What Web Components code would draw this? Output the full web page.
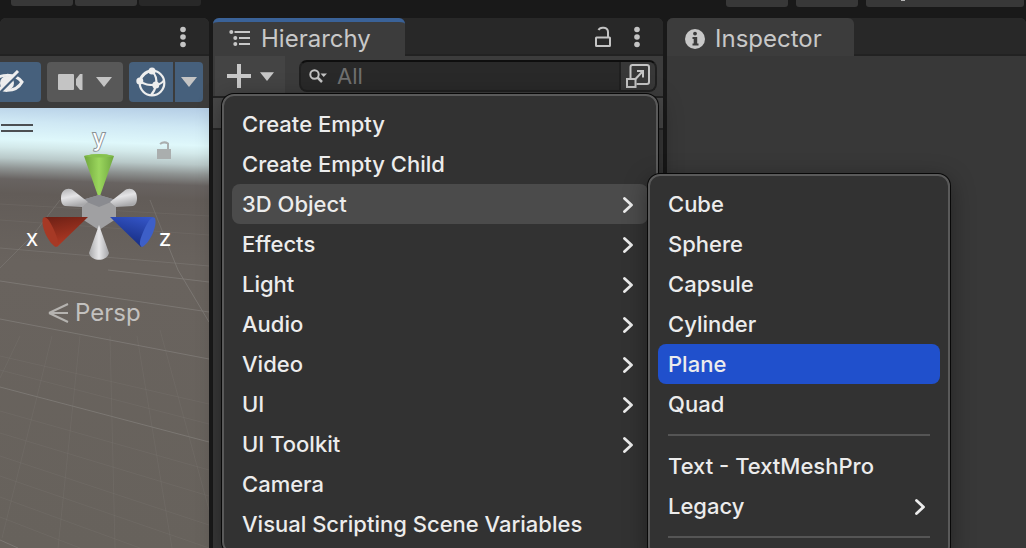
<!DOCTYPE html>
<html lang="en">
<head>
<meta charset="utf-8">
<meta name="viewport" content="width=device-width, initial-scale=1">
<title>Editor</title>
<style>
html,body{margin:0;height:100%;overflow:hidden;background:#191919;color:#c8c8c8;font-family:Inter,"Liberation Sans",sans-serif;font-size:24px}
</style>
</head>
<body>
<editor-app></editor-app>
<script>
const define = (name, html, setup) => customElements.define(name, class extends HTMLElement {
  constructor() {
    super();
    this.attachShadow({ mode: 'open' }).innerHTML = html;
  }
  connectedCallback() { if (setup) setup(this, this.shadowRoot); }
});

const icons = {
  kebab: [8, 22, '<g fill="currentColor"><circle cx="4" cy="3.5" r="2.8"/><circle cx="4" cy="11" r="2.8"/><circle cx="4" cy="18.5" r="2.8"/></g>'],
  lock: [16, 22, '<g fill="none" stroke="currentColor" stroke-width="2"><rect x="1" y="11.500" width="14" height="8.500" rx=".5"/><path d="M13 11V6C13 .8 5 .5 3.500 4"/></g>'],
  down: [16, 10, '<path d="M0 0H16L8 10Z" fill="currentColor"/>'],
  plus: [24, 24, '<path d="M12 0V24M0 12H24" stroke="currentColor" stroke-width="4"/>'],
  tree: [22, 18, '<g fill="currentColor"><circle cx="2.300" cy="2" r="2"/><circle cx="6.300" cy="8" r="2"/><circle cx="6.300" cy="14" r="2"/></g><path d="M5.500 2H21M10 8H21M10 14H21" stroke="currentColor" stroke-width="2"/>'],
  info: [20, 20, '<circle cx="10" cy="10" r="10" fill="currentColor"/><circle cx="10" cy="4.600" r="1.900" fill="#3c3c3c"/><path d="M7.500 8H12.200V14.500H13.500V16.500H7.500V14.500H8.700V10H7.500Z" fill="#3c3c3c"/>'],
  search: [18, 14, '<circle cx="5.500" cy="5.500" r="4.200" fill="none" stroke="currentColor" stroke-width="2"/><path d="M8.500 8.500L13 13" stroke="currentColor" stroke-width="2.500"/><path d="M11.500 4.500H18L14.700 8Z" fill="currentColor"/>'],
  expand: [24, 24, '<g fill="none" stroke="currentColor" stroke-width="2"><path d="M4.500 14V3Q4.500 1 6.500 1H21Q23 1 23 3V18Q23 20 21 20H10.500"/><path d="M9.500 15L17 7M11 7H17V13.500"/><rect x="1" y="15" width="8.500" height="8"/></g>'],
  chevron: [12, 18, '<path d="M2.500 3.500L9.500 10L2.500 16.500" fill="none" stroke="currentColor" stroke-width="2.800" stroke-linecap="round" stroke-linejoin="round"/>'],
  camera: [26, 18, '<rect y="1" width="16" height="16" rx="1" fill="currentColor"/><path d="M18 6L22 1H24.500V17H22L18 12Z" fill="currentColor"/>'],
  eye: [34, 24, '<path d="M2 13C8 3 25 3 32 12C26 23 9 23 2 13Z" fill="none" stroke="currentColor" stroke-width="3"/><circle cx="17" cy="13" r="7" fill="currentColor"/><path d="M9 23L28 4" stroke="#46607c" stroke-width="3"/><path d="M6 23L28 1" stroke="currentColor" stroke-width="3"/>'],
  globe: [30, 30, '<g fill="none" stroke="currentColor" stroke-width="2.200"><circle cx="16" cy="16" r="12.300"/><path d="M16 4C20 8 21 13 20 18C19 23 17 26 15 28M4 14C8 18 13 18 20 18C24 17 27 16 28 13M4 14C6 9 10 5 16 4"/></g><g fill="currentColor"><circle cx="16" cy="4" r="3.500"/><circle cx="3.800" cy="14" r="3.500"/><circle cx="19.800" cy="18" r="3.500"/></g>']
};

define('ui-icon', '', (el, root) => {
  const [w, h, art] = icons[el.getAttribute('name')];
  const s = Number(el.getAttribute('width')) || w;
  root.innerHTML = `<style>:host{display:inline-flex;flex:none}svg{display:block}</style>
    <svg width="${s}" height="${Math.round(h * s / w)}" viewBox="0 0 ${w} ${h}" aria-hidden="true">${art}</svg>`;
});

define('dock-tab', `<style>
  :host{display:flex}
  button{all:unset;box-sizing:border-box;display:flex;align-items:center;gap:10px;height:38px;padding:4px 32px 0 18px;background:#3c3c3c;color:#c8c8c8;border-radius:6px 6px 0 0;white-space:nowrap;line-height:34px}
  :host([active]) button{border-top:4px solid #3a6298;padding:0 34px 0 16px}
</style><button role="tab"><slot name="icon"></slot><slot></slot></button>`);

define('dock-panel', `<style>
  :host{display:flex;flex-direction:column;min-width:0;background:#383838;border-radius:6px 6px 0 0}
  header{display:flex;height:38px;flex:none;background:#282828;border-radius:6px 6px 0 0;box-shadow:inset 0 -2px #222}
  .tools{margin-left:auto;display:flex;align-items:center;gap:22px;padding-right:22px;color:#c4c4c4}
</style><header><slot name="tab"></slot><div class="tools"><slot name="tools"></slot></div></header><slot></slot>`);

define('icon-button', `<style>
  :host{display:inline-flex}
  button{all:unset;display:flex;align-items:center;justify-content:center}
</style><button><slot></slot></button>`, (el, root) => {
  root.querySelector('button').setAttribute('aria-label', el.getAttribute('label'));
});

define('top-bar', `<style>
  :host{display:flex;height:18px;align-items:flex-start;padding:0 2px 0 11px;overflow:hidden}
  span{display:block;width:62px;height:6px;background:#383838;border-radius:0 0 3px 3px;margin-right:2px}
  span.off{background:#282828}
  .right{display:flex;gap:8px;margin-left:auto}
  .right span{margin:0;height:7px}
  .right .wide{width:158px;background:linear-gradient(#b4b4b4,#b4b4b4) 35px 0/4px 1px no-repeat #383838}
</style><span></span><span></span><span class="off"></span><div class="right"><span></span><span></span><span class="wide"></span></div>`);

define('scene-toolbar', `<style>
  :host{display:flex;justify-content:flex-end;gap:6px;height:40px;padding:6px;background:#3c3c3c;flex:none;overflow:hidden}
  icon-button{height:40px;align-items:center;justify-content:center;background:#585858;border-radius:4px;flex:none;color:#c4c4c4}
  .on{background:#46607c;color:#eee}
  .eye{width:60px;justify-content:flex-end;box-sizing:border-box;padding-right:17px}
  .cam{width:76px}
  .pair{display:flex;gap:2px}
  .globe{width:44px;border-radius:4px 0 0 4px}
  .more{width:28px;border-radius:0 4px 4px 0;color:#c4c4c4}
  .cam ui-icon + ui-icon{margin-left:12px}
</style>
<icon-button class="on eye" label="Scene visibility"><ui-icon name="eye"></ui-icon></icon-button>
<icon-button class="cam" label="Camera settings"><ui-icon name="camera"></ui-icon><ui-icon name="down"></ui-icon></icon-button>
<div class="pair"><icon-button class="on globe" label="Gizmos"><ui-icon name="globe"></ui-icon></icon-button><icon-button class="on more" label="Gizmo options"><ui-icon name="down"></ui-icon></icon-button></div>`);

define('scene-view', `<style>
  :host{display:block;position:relative;flex:1;min-height:0;overflow:hidden;
    background:linear-gradient(182deg,#b4cde5 0,#cfe8f4 20px,#dff8fb 38px,#d3e9ea 46px,#b9c9c9 57px,#8f9493 67px,#686361 78px,#625c58 92px,#69635e 160px,#67625c 100%)}
  svg{display:block;position:absolute;left:0;top:0}
  text{font-size:23px;font-family:Inter,sans-serif;fill:#fff;text-anchor:middle}
  button{all:unset;position:absolute;left:48px;top:190px;display:flex;align-items:center;gap:6px;line-height:30px;color:#c3c1bf}
  button svg{position:static}
</style>
<svg width="100%" height="440" viewBox="0 0 209 440" preserveAspectRatio="xMinYMin slice" aria-label="Scene">
  <defs>
    <linearGradient id="g"><stop stop-color="#6fa53c"/><stop offset=".5" stop-color="#9bd65d"/><stop offset="1" stop-color="#6fa740"/></linearGradient>
    <linearGradient id="w"><stop stop-color="#a9a9ab"/><stop offset=".5" stop-color="#e6e6e8"/><stop offset="1" stop-color="#a5a5a8"/></linearGradient>
    <linearGradient id="wl" x1="0" y1="0" x2=".3" y2="1"><stop stop-color="#b0b0b2"/><stop offset=".5" stop-color="#e4e4e6"/><stop offset="1" stop-color="#a9a9ab"/></linearGradient>
    <linearGradient id="r" x1="0" y1="0" x2=".3" y2="1"><stop stop-color="#6c2015"/><stop offset="1" stop-color="#b23a24"/></linearGradient>
    <linearGradient id="b" x1="1" y1="0" x2=".6" y2="1"><stop stop-color="#3658cc"/><stop offset="1" stop-color="#162c80"/></linearGradient>
  </defs>
  <g fill="none" stroke="#827e79">
    <path d="M0 173L209 204M108 162L209 174M0 211L209 251M0 279L209 334M0 432L18 440M165 130L178 162L209 214" opacity=".75"/>
    <path d="M0 160L33 127L60 92M150 92L165 130M0 140L209 158" opacity=".5"/>
    <path d="M0 96L209 108M0 112L209 127M52 228L2 430M80 228L58 440M110 228L115 440M137 228L172 440M160 222L209 402M0 303L209 362M0 325L209 388M0 348L209 417M0 368L209 440M0 389L140 440M0 409L80 440M20 228L0 270M0 248L209 296M0 262L209 316" opacity=".22"/>
  </g>
  <path d="M1 17H33M1 23H33" stroke="#4c4f52" stroke-width="2"/>
  <text x="99" y="38" stroke="#8a9296" stroke-width="2" paint-order="stroke">y</text>
  <text x="32" y="138">x</text><text x="165" y="138">z</text>
  <g fill="#aaaeae"><rect x="157" y="41" width="14" height="10"/><path d="M168 41V35.500Q164 33 160 36" fill="none" stroke="#aaaeae" stroke-width="2"/></g>
  <path d="M84 48Q99 44 114 48L100 88H98Z" fill="url(#g)"/>
  <path d="M84 48Q99 44 114 48Q99 51 84 48Z" fill="#87c24e"/>
  <path d="M82 92L99 87L116 92V111L99 122L82 111Z" fill="#a0a0a2"/>
  <path d="M82 92L99 87L116 92L99 99Z" fill="#8a8b90"/>
  <path d="M61 90C61 80 70 79 74 83L88 94L82 99L65 98C62 97 61 94 61 90Z" fill="url(#wl)"/>
  <path d="M137 90C137 80 128 79 124 83L110 94L116 99L133 98C136 97 137 94 137 90Z" fill="url(#wl)"/>
  <path d="M99 117L109 145C107 154 91 154 89 145Z" fill="url(#w)"/>
  <path d="M45 109L88 109L57 139Z" fill="url(#r)"/>
  <path d="M43 110C46 107 50 113 54 122C58 131 60 137 56 139C50 137 40 119 43 110Z" fill="#a63925"/>
  <path d="M153 109L110 109L141 139Z" fill="url(#b)"/>
  <path d="M155 110C152 107 148 113 144 122C140 131 138 137 142 139C148 137 158 119 155 110Z" fill="#3d5fc8"/>
</svg>
<button><svg width="21" height="22" viewBox="0 0 21 22" aria-hidden="true"><path d="M1 11L20 2M1 11H20M1 11L20 20" fill="none" stroke="#b5b3b0" stroke-width="2"/></svg>Persp</button>`);

define('search-field', `<style>
  :host{display:flex;flex:1;min-width:0;height:32px;box-sizing:border-box;background:#292929;border:2px solid #202020;border-top-color:#0e0e0e;border-radius:8px;overflow:hidden}
  label{display:flex;align-items:center;gap:10px;flex:1;min-width:0;padding-left:8px;color:#c4c4c4}
  input{all:unset;flex:1;min-width:0;font:22px/28px Inter,sans-serif;color:#ddd}
  input::placeholder{color:#707070;opacity:1}
  icon-button{width:36px;border-left:2px solid #202020;background:#383838;color:#c4c4c4;justify-content:center;align-items:center;box-sizing:border-box}
</style>
<label><ui-icon name="search"></ui-icon><input placeholder="All" aria-label="Search hierarchy"></label>
<icon-button label="Open search window"><ui-icon name="expand"></ui-icon></icon-button>`);

define('hierarchy-toolbar', `<style>
  :host{display:flex;align-items:center;height:40px;flex:none;padding:0 6px 0 2px;gap:14px;background:#3c3c3c;border-bottom:2px solid #232323}
  icon-button{width:70px;height:40px;background:#444;color:#c8c8c8;align-items:center;justify-content:center}
  icon-button ui-icon + ui-icon{margin-left:9px}
</style>
<icon-button label="Create"><ui-icon name="plus"></ui-icon><ui-icon name="down" width="14"></ui-icon></icon-button><search-field></search-field>`);

define('context-menu', `<style>
  :host{display:block;box-sizing:border-box;position:absolute;z-index:2;padding:8px;background:#323232;border:2px solid #5a5a5a;border-radius:12px;box-shadow:0 0 0 1px #080808,0 6px 24px rgba(0,0,0,.4)}
</style><div role="menu"><slot></slot></div>`);

define('menu-item', `<style>
  :host{display:block;position:relative}
  button{all:unset;box-sizing:border-box;display:flex;align-items:center;justify-content:space-between;width:100%;height:40px;padding:0 14px 0 10px;border-radius:8px;color:#ececec;font-size:22px;font-weight:500;line-height:40px;white-space:nowrap}
  :host([open]) button{background:#4b4b4b}
  :host([selected]) button{background:#2050cc}
  ui-icon{display:none}
  :host([more]) ui-icon{display:inline-flex}
</style><button role="menuitem"><slot></slot><ui-icon name="chevron"></ui-icon></button><slot name="submenu"></slot>`);

define('menu-separator', `<style>:host{display:block;height:2px;margin:10px;background:#555}</style>`);

define('editor-app', `<style>
  :host{display:flex;flex-direction:column;height:100vh;overflow:hidden}
  main{flex:1;min-height:0;display:grid;grid-template-columns:209fr 450fr 359fr;gap:4px}
  .hierarchy{position:relative;z-index:1}
  .root-row{height:30px;background:#484848;border-bottom:2px solid #282828}
  .create{left:9px;right:5px;top:76px}
  .objects{left:100%;top:-10px;width:302px}
</style>
<top-bar></top-bar>
<main>
  <dock-panel><icon-button slot="tools" label="Scene options"><ui-icon name="kebab"></ui-icon></icon-button>
    <scene-toolbar></scene-toolbar><scene-view></scene-view></dock-panel>
  <dock-panel class="hierarchy">
    <dock-tab slot="tab" active><ui-icon slot="icon" name="tree"></ui-icon>Hierarchy</dock-tab>
    <icon-button slot="tools" label="Lock"><ui-icon name="lock"></ui-icon></icon-button>
    <icon-button slot="tools" label="Hierarchy options"><ui-icon name="kebab"></ui-icon></icon-button>
    <hierarchy-toolbar></hierarchy-toolbar>
    <div class="root-row"></div>
    <context-menu class="create">
      <menu-item>Create Empty</menu-item>
      <menu-item>Create Empty Child</menu-item>
      <menu-item more open>3D Object
        <context-menu slot="submenu" class="objects">
          <menu-item>Cube</menu-item>
          <menu-item>Sphere</menu-item>
          <menu-item>Capsule</menu-item>
          <menu-item>Cylinder</menu-item>
          <menu-item selected>Plane</menu-item>
          <menu-item>Quad</menu-item>
          <menu-separator></menu-separator>
          <menu-item>Text - TextMeshPro</menu-item>
          <menu-item more>Legacy</menu-item>
          <menu-separator></menu-separator>
        </context-menu>
      </menu-item>
      <menu-item more>Effects</menu-item>
      <menu-item more>Light</menu-item>
      <menu-item more>Audio</menu-item>
      <menu-item more>Video</menu-item>
      <menu-item more>UI</menu-item>
      <menu-item more>UI Toolkit</menu-item>
      <menu-item>Camera</menu-item>
      <menu-item>Visual Scripting Scene Variables</menu-item>
    </context-menu>
  </dock-panel>
  <dock-panel><dock-tab slot="tab"><ui-icon slot="icon" name="info"></ui-icon>Inspector</dock-tab></dock-panel>
</main>`);
</script>
</body>
</html>
